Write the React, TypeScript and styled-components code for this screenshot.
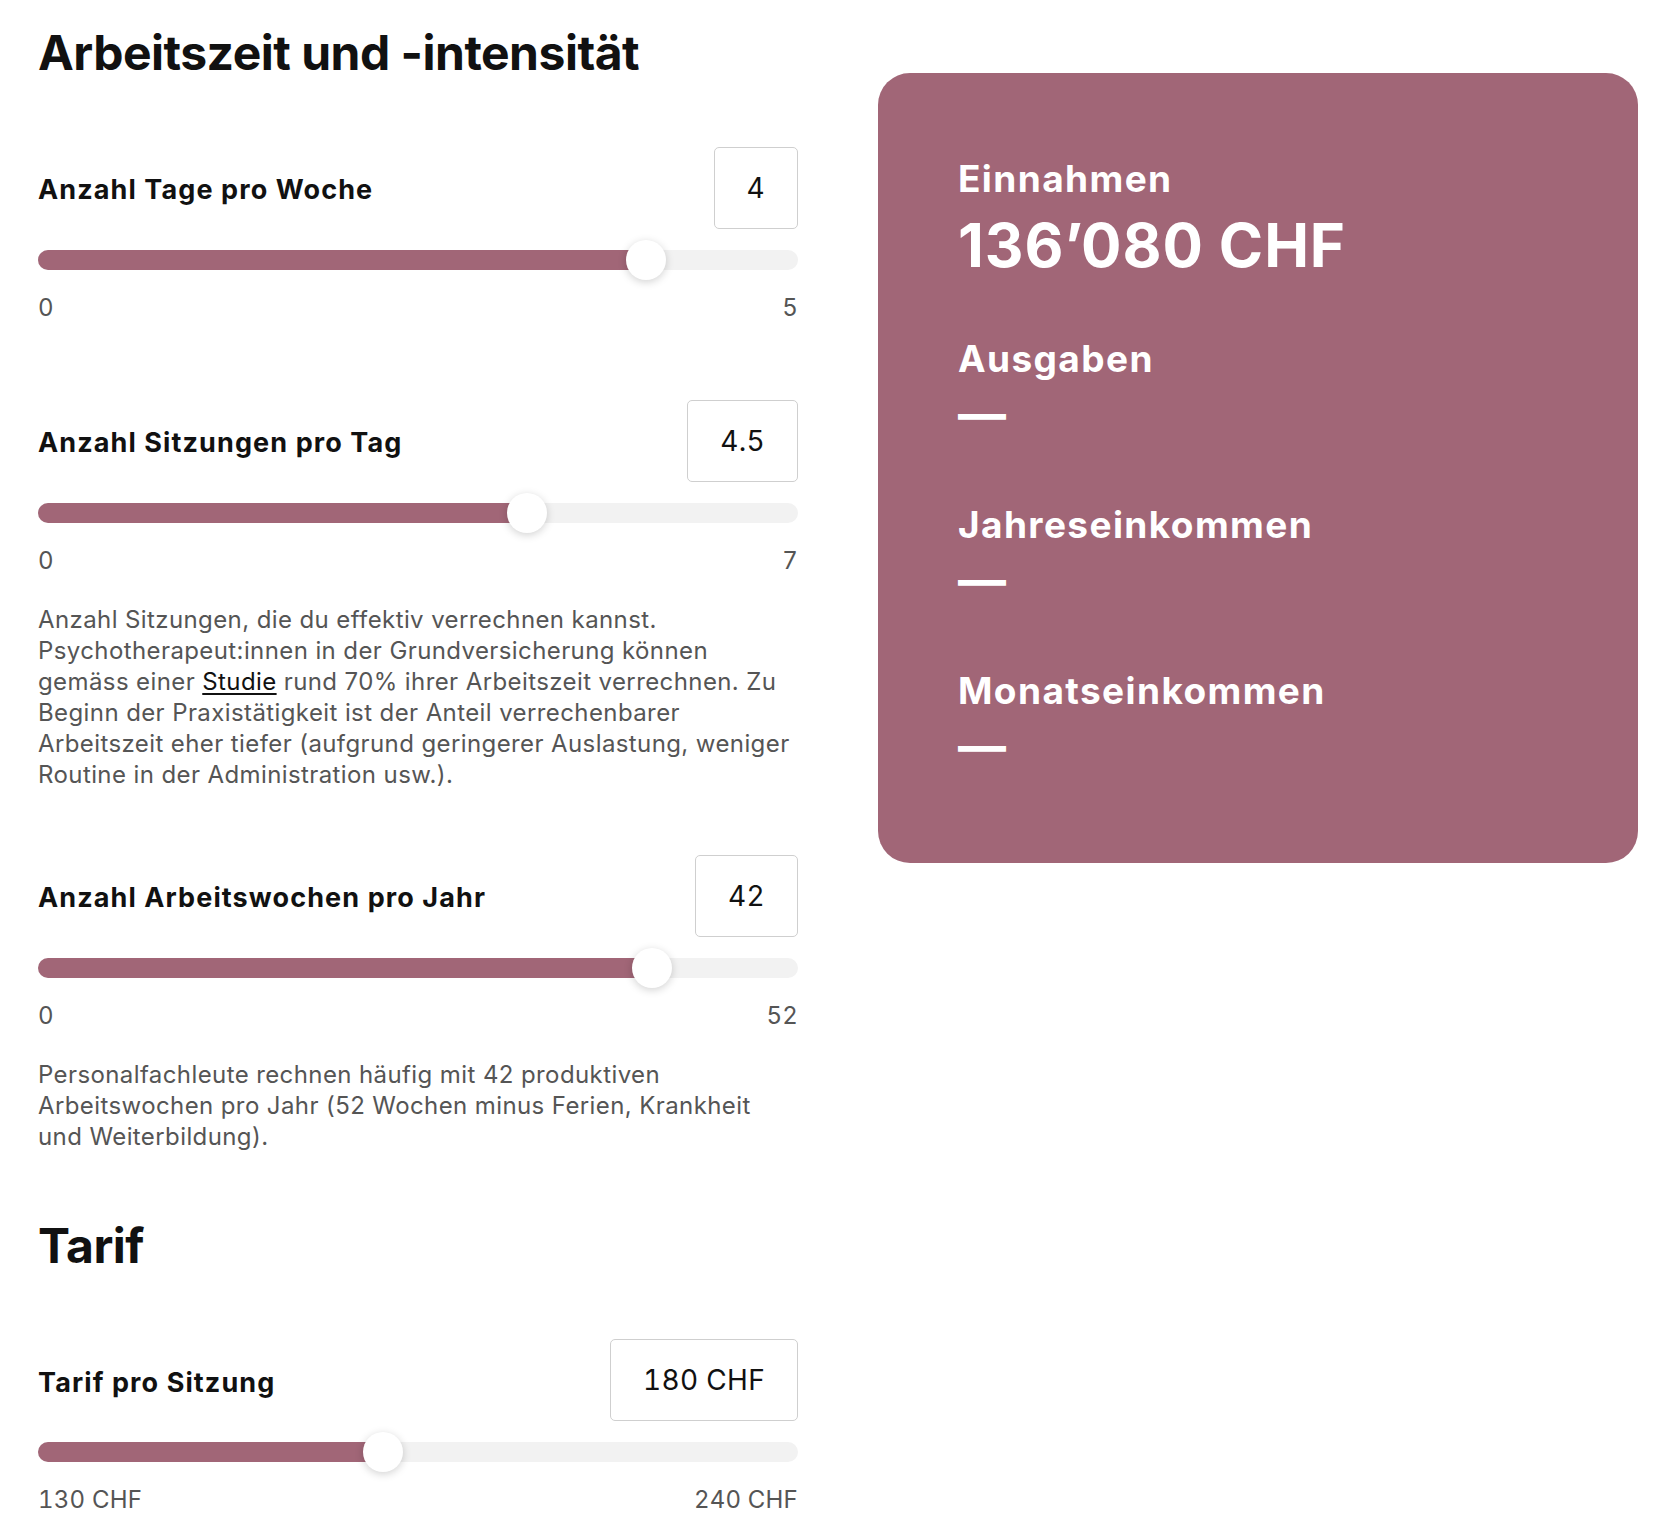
import React from 'react';
import styled, { createGlobalStyle } from 'styled-components';

const GlobalStyle = createGlobalStyle`
  html, body {
    margin: 0;
    padding: 0;
    background: #fff;
  }
  body {
    font-family: Inter, "Liberation Sans", Arial, sans-serif;
    color: #111;
    -webkit-font-smoothing: antialiased;
  }
`;

const ACCENT = '#a16677';

const Page = styled.div`
  display: grid;
  grid-template-columns: 760px 760px;
  column-gap: 80px;
  align-items: start;
  padding: 24px 36px 20px 38px;
`;

const Column = styled.div`
  display: flex;
  flex-direction: column;
  gap: 65px;
`;

const Heading = styled.h2`
  margin: 0;
  font-size: 48px;
  line-height: 57.6px;
  font-weight: 700;
  letter-spacing: -0.5px;
`;

const Field = styled.div<{ $extra?: boolean }>`
  display: flex;
  flex-direction: column;
  margin-bottom: ${(p) => (p.$extra ? '12px' : '0')};
`;

const FieldRow = styled.div`
  display: flex;
  align-items: center;
  justify-content: space-between;
  height: 82px;
`;

const Label = styled.label`
  font-size: 27px;
  font-weight: 700;
  letter-spacing: 1.1px;
  transform: translateY(2px);
`;

const ValueBox = styled.div`
  box-sizing: border-box;
  height: 82px;
  display: flex;
  align-items: center;
  padding: 0 32px;
  border: 1.5px solid #cfcfcf;
  border-radius: 5px;
  font-size: 28px;
  letter-spacing: 0.3px;
  font-variant-numeric: tabular-nums;
  color: #111;
`;

const Track = styled.div`
  position: relative;
  margin-top: 21px;
  height: 20px;
  border-radius: 10px;
  background: #f2f2f2;
`;

const Fill = styled.div`
  position: absolute;
  left: 0;
  top: 0;
  bottom: 0;
  border-radius: 10px 0 0 10px;
  background: ${ACCENT};
`;

const Thumb = styled.div`
  position: absolute;
  top: 50%;
  width: 40px;
  height: 40px;
  border-radius: 50%;
  background: #fff;
  box-shadow: 0 2px 8px rgba(0, 0, 0, 0.18);
  transform: translate(-50%, -50%);
`;

const Scale = styled.div`
  display: flex;
  justify-content: space-between;
  margin-top: 23px;
  font-size: 24px;
  line-height: 30px;
  letter-spacing: 0.2px;
  font-variant-numeric: tabular-nums;
  color: #555;
`;

const Note = styled.p`
  margin: 28px 0 0;
  font-size: 24px;
  line-height: 31px;
  letter-spacing: 0.4px;
  color: #555;

  a {
    color: #111;
    text-decoration: underline;
    text-underline-offset: 3px;
  }
`;

const Card = styled.div`
  margin-top: 49px;
  padding: 84px 80px;
  border-radius: 32px;
  background: ${ACCENT};
  color: #fff;
  display: flex;
  flex-direction: column;
  gap: 56px;
`;

const Stat = styled.div`
  display: flex;
  flex-direction: column;
`;

const StatLabel = styled.div`
  font-size: 37px;
  line-height: 43.2px;
  font-weight: 700;
  letter-spacing: 1.4px;
`;

const StatValue = styled.div<{ $empty?: boolean }>`
  margin-top: ${(p) => (p.$empty ? '5px' : '9px')};
  margin-bottom: ${(p) => (p.$empty ? '4px' : '0')};
  font-size: ${(p) => (p.$empty ? '48px' : '60px')};
  line-height: ${(p) => (p.$empty ? '57.6px' : '72px')};
  font-weight: 700;
  letter-spacing: 0.9px;
`;

interface SliderFieldProps {
  label: string;
  display: string;
  value: number;
  min: number;
  max: number;
  minLabel: string;
  maxLabel: string;
  extra?: boolean;
  children?: React.ReactNode;
}

const SliderField = ({ label, display, value, min, max, minLabel, maxLabel, extra, children }: SliderFieldProps) => {
  const pct = ((value - min) / (max - min)) * 100;
  return (
    <Field $extra={extra}>
      <FieldRow>
        <Label>{label}</Label>
        <ValueBox>{display}</ValueBox>
      </FieldRow>
      <Track>
        <Fill style={{ width: `${pct}%` }} />
        <Thumb style={{ left: `${pct}%` }} />
      </Track>
      <Scale>
        <span>{minLabel}</span>
        <span>{maxLabel}</span>
      </Scale>
      {children}
    </Field>
  );
};

const stats = [
  { label: 'Einnahmen', value: '136’080 CHF' },
  { label: 'Ausgaben', value: '' },
  { label: 'Jahreseinkommen', value: '' },
  { label: 'Monatseinkommen', value: '' },
];

const App = () => {
  return (
    <>
      <GlobalStyle />
      <Page>
        <Column>
          <Heading>Arbeitszeit und -intensität</Heading>
          <SliderField label='Anzahl Tage pro Woche' display='4' value={4} min={0} max={5} minLabel='0' maxLabel='5' extra />
          <SliderField label='Anzahl Sitzungen pro Tag' display='4.5' value={4.5} min={0} max={7} minLabel='0' maxLabel='7'>
            <Note>
              Anzahl Sitzungen, die du effektiv verrechnen kannst.<br />
              Psychotherapeut:innen in der Grundversicherung können<br />
              gemäss einer <a href='#'>Studie</a> rund 70% ihrer Arbeitszeit verrechnen. Zu<br />
              Beginn der Praxistätigkeit ist der Anteil verrechenbarer<br />
              Arbeitszeit eher tiefer (aufgrund geringerer Auslastung, weniger<br />
              Routine in der Administration usw.).
            </Note>
          </SliderField>
          <SliderField label='Anzahl Arbeitswochen pro Jahr' display='42' value={42} min={0} max={52} minLabel='0' maxLabel='52'>
            <Note>
              Personalfachleute rechnen häufig mit 42 produktiven<br />
              Arbeitswochen pro Jahr (52 Wochen minus Ferien, Krankheit<br />
              und Weiterbildung).
            </Note>
          </SliderField>
          <Heading>Tarif</Heading>
          <SliderField label='Tarif pro Sitzung' display='180 CHF' value={180} min={130} max={240} minLabel='130 CHF' maxLabel='240 CHF' />
        </Column>
        <Card>
          {stats.map((s) => (
            <Stat key={s.label}>
              <StatLabel>{s.label}</StatLabel>
              <StatValue $empty={!s.value}>{s.value || '—'}</StatValue>
            </Stat>
          ))}
        </Card>
      </Page>
    </>
  );
};

export default App;
